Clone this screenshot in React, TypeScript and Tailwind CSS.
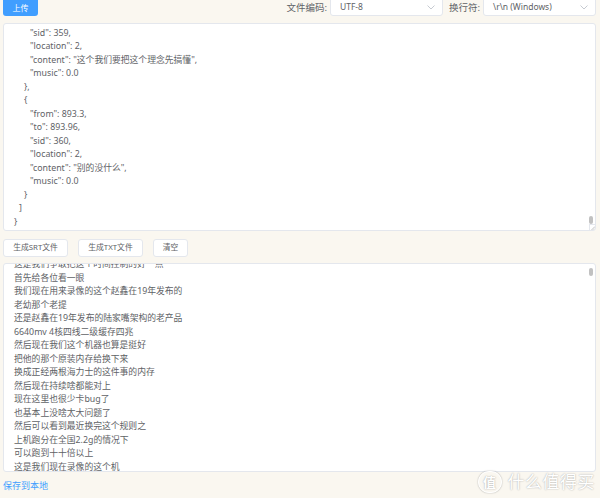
import * as React from "react"

const jsonLines: [number, string][] = [
  [3, '"to": 893.22,'],
  [3, '"sid": 359,'],
  [3, '"location": 2,'],
  [3, '"content": "这个我们要把这个理念先搞懂",'],
  [3, '"music": 0.0'],
  [2, "},"],
  [2, "{"],
  [3, '"from": 893.3,'],
  [3, '"to": 893.96,'],
  [3, '"sid": 360,'],
  [3, '"location": 2,'],
  [3, '"content": "别的没什么",'],
  [3, '"music": 0.0'],
  [2, "}"],
  [1, "]"],
  [0, "}"],
]

const indent = ["pl-[10px]", "pl-[15px]", "pl-[20px]", "pl-[26px]"]

const textLines = [
  "这是我们争取把这个时间控制的好一点",
  "首先给各位看一眼",
  "我们现在用来录像的这个赵鑫在19年发布的",
  "老幼那个老提",
  "还是赵鑫在19年发布的陆家嘴架构的老产品",
  "6640mv 4核四线二级缓存四兆",
  "然后现在我们这个机器也算是挺好",
  "把他的那个原装内存给换下来",
  "换成正经两根海力士的这件事的内存",
  "然后现在持续啥都能对上",
  "现在这里也很少卡bug了",
  "也基本上没啥太大问题了",
  "然后可以看到最近换完这个规则之",
  "上机跑分在全国2.2g的情况下",
  "可以跑到十十倍以上",
  "这是我们现在录像的这个机",
]

function Chevron() {
  return (
    <svg width="8" height="5" viewBox="0 0 8 5" fill="none" className="shrink-0">
      <path d="M0.5 0.5 L4 4 L7.5 0.5" stroke="#c0c4cc" strokeWidth="0.9" />
    </svg>
  )
}

function Select({ value }: { value: string }) {
  return (
    <div className="w-[113px] h-[20px] bg-white border border-[#e4e7ed] rounded-[3px] flex items-end justify-between pb-[3px] pl-[9px] pr-[7px]">
      <span className="text-[8.5px] leading-[10px] text-[#606266]">{value}</span>
      <span className="pb-[2px]"><Chevron /></span>
    </div>
  )
}

function Scrollbox({ children, thumbTop, height }: { children: React.ReactNode; thumbTop: string; height: string }) {
  return (
    <div className={`relative bg-white border border-[#e4e7ed] rounded-[3px] overflow-hidden ${height}`}>
      {children}
      <div className={`absolute right-[2px] w-[4px] h-[8px] rounded-full bg-[#c1c1c1] ${thumbTop}`} />
    </div>
  )
}

function Btn({ label, w }: { label: string; w: string }) {
  return (
    <button className={`h-[18px] ${w} bg-white border border-[#e4e7ed] rounded-[3px] text-[7.8px] text-[#606266] flex items-center justify-center`}>
      {label}
    </button>
  )
}

export default function App() {
  return (
    <div
      className="relative w-[600px] h-[498px] overflow-hidden bg-[#faf7f0] px-[3px] text-[#606266]"
      style={{ fontFamily: '"Noto Sans", "Noto Sans CJK SC", sans-serif' }}
    >
      {/* toolbar, scrolled slightly out of view */}
      <div className="flex items-end justify-between -mt-[4px] pr-[1px]">
        <button className="w-[35px] h-[20px] rounded-[3px] bg-[#409eff] text-white text-[8px] leading-[10px] flex items-end justify-center pb-[3px]">
          上传
        </button>
        <div className="flex items-end">
          <span className="text-[9.5px] leading-[12px] pb-[2px] mr-[3px]">文件编码:</span>
          <Select value="UTF-8" />
          <span className="text-[9.5px] leading-[12px] pb-[2px] ml-[6px] mr-[3px]">换行符:</span>
          <Select value="\r\n (Windows)" />
        </div>
      </div>

      <div className="mt-[7px] pr-[1px]">
        <Scrollbox height="h-[208px]" thumbTop="top-[192px]">
          <div className="-mt-[11px] text-[8.8px] leading-[13.5px] whitespace-pre">
            {jsonLines.map(([lvl, t], i) => (
              <div key={i} className={indent[lvl]}>{t}</div>
            ))}
          </div>
          <div className="absolute right-0 bottom-0 w-[6px] h-[6px] border-l border-t border-[#e4e7ed] bg-white">
            <svg width="6" height="6" viewBox="0 0 6 6"><path d="M1.5 5 L5 1.5 M3.5 5 L5 3.5" stroke="#999" strokeWidth="0.6" /></svg>
          </div>
        </Scrollbox>
      </div>

      <div className="mt-[8px] flex gap-[10px]">
        <Btn label="生成SRT文件" w="w-[65px]" />
        <Btn label="生成TXT文件" w="w-[65px]" />
        <Btn label="清空" w="w-[35px]" />
      </div>

      <div className="mt-[6px] pr-[1px]">
        <Scrollbox height="h-[209px]" thumbTop="top-[4px]">
          <div className="-mt-[6px] pl-[10px] text-[8.8px] leading-[13.5px]">
            {textLines.map((t, i) => (
              <div key={i} className="whitespace-nowrap">{t}</div>
            ))}
          </div>
        </Scrollbox>
      </div>

      <div className="mt-[7px] text-[9px] leading-[14px] text-[#409eff]">保存到本地</div>

      {/* watermark */}
      <div className="absolute right-[5px] bottom-[5px] flex items-center gap-[6px] text-white [text-shadow:0_0_1.5px_#9a9a9a]">
        <div className="w-[24px] h-[22px] rounded-full border-[1.5px] border-white shadow-[0_0_1.5px_#9a9a9a] flex items-center justify-center text-[13px] font-bold leading-none">值</div>
        <div className="text-[17px] leading-[22px] tracking-[0.5px]">什么值得买</div>
      </div>
    </div>
  )
}
